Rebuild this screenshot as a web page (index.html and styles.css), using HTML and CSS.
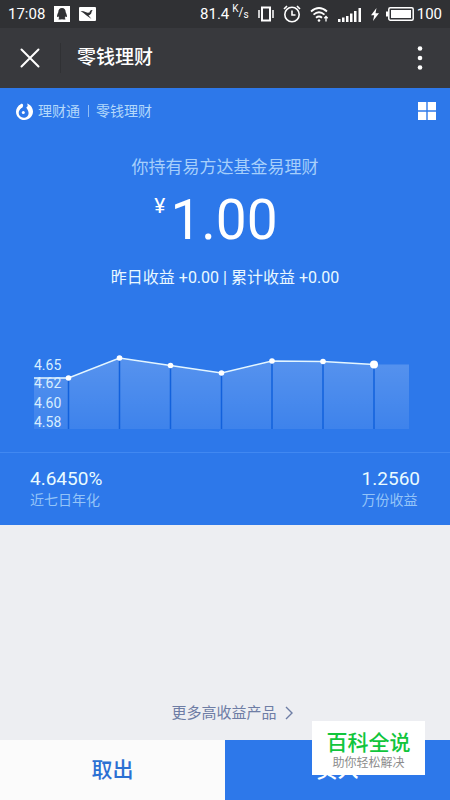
FILE: index.html
```html
<!DOCTYPE html>
<html lang="zh-CN">
<head>
<meta charset="utf-8">
<meta name="viewport" content="width=device-width, initial-scale=1">
<title>零钱理财</title>
<link rel="stylesheet" href="styles.css">
</head>
<body>
<div class="status">
  <span class="status-time">17:08</span>
  <svg class="notice" width="16" height="16" viewBox="0 0 16 16" aria-hidden="true">
    <path fill="#fff" d="M0 0h16v16H0z"/>
    <path fill="#303134" d="M8 2c-2.500 0-3.700 1.800-3.700 4.200C3.700 7.500 2.800 9.200 3 11c.5.300 1-.3 1.300-.8.200.8.600 1.400 1.100 1.900-.7.400-1 .8-.8 1.400H7.500L8 13l.5.500h2.900c.2-.6-.1-1-.8-1.400.5-.5.900-1.100 1.100-1.900.3.500.8 1.100 1.300.8.200-1.800-.7-3.500-1.300-4.800C11.700 3.800 10.500 2 8 2z"/>
  </svg>
  <svg width="17" height="14" viewBox="0 0 17 14" aria-hidden="true">
    <rect width="17" height="14" rx="1" fill="#fff"/>
    <path fill="#303134" d="M1.500 4l3 .3 4 1.500 2-.3.500-1.500 1.200-1 1.500.5-1 1-.5 2-1.500 1.500-1.200.3 3 3.700-5-3.500-3-2.500z"/>
  </svg>
  <span class="speed">81.4 <span class="unit"><sup>K</sup>/<sub>s</sub></span></span>
  <svg class="vibrate" width="16" height="16" viewBox="0 0 16 16" fill="none" stroke="#fff" aria-hidden="true">
    <rect x="4" y="1.500" width="8" height="13" stroke-width="2"/><path stroke-width="1.500" d="M1 4v8M15 4v8"/>
  </svg>
  <svg class="alarm" width="18" height="18" viewBox="0 0 18 18" fill="none" stroke="#fff" stroke-width="1.600" aria-hidden="true">
    <circle cx="9" cy="9.500" r="7.200"/><path d="M9 5.500v4.500h3.500M1 4l3-3M17 4l-3-3"/>
  </svg>
  <svg class="wifi" width="19" height="17" viewBox="0 0 19 17" fill="none" stroke="#fff" stroke-width="1.800" aria-hidden="true">
    <path d="M1 5.500q8-7 16 0M3.500 8.700q5.500-5 11 0M6 11.800q3-2.500 6 0"/><circle cx="9" cy="14.500" r="1.300" fill="#fff" stroke="none"/>
    <path stroke-width="1.300" d="M16 10.500v5M14.300 12.200l1.700-1.700 1.700 1.700"/>
  </svg>
  <svg class="signal" width="24" height="15" viewBox="0 0 24 15" fill="#fff" aria-hidden="true">
    <path d="M0 12h2.500v3H0zM4 10.500h2.500V15H4zM8 9h2.500v6H8zM12 6.500h2.500V15H12zM16 4h2.500v11H16zM20.500 1H23v14h-2.500z"/>
  </svg>
  <svg class="bolt" width="8" height="13" viewBox="0 0 8 13" fill="#fff" aria-hidden="true"><path d="M5.500 0L0 7.200h3.200L2 13l6-7.800H4.500z"/></svg>
  <svg width="28" height="14" viewBox="0 0 28 14" aria-hidden="true">
    <rect x="2.800" y=".8" width="24.400" height="12.400" rx="1.500" fill="none" stroke="#fff" stroke-width="1.500"/>
    <path fill="#fff" d="M5 3h20v8H5zM0 4.500h2v5H0z"/>
  </svg>
  <span class="battery">100</span>
</div>

<header class="navbar">
  <button class="icon-button close" type="button" aria-label="关闭">
    <svg width="20" height="20" viewBox="0 0 20 20" fill="none" stroke="#fff" stroke-width="2" stroke-linecap="round"><path d="M1.500 1.500l17 17M18.500 1.500l-17 17"/></svg>
  </button>
  <h1 class="title">零钱理财</h1>
  <button class="icon-button more" type="button" aria-label="更多">
    <svg width="6" height="24" viewBox="0 0 6 24" fill="#fff"><circle cx="3" cy="2.500" r="2.300"/><circle cx="3" cy="12" r="2.300"/><circle cx="3" cy="21.500" r="2.300"/></svg>
  </button>
</header>

<main class="content">
  <section class="hero">
    <div class="brand">
      <svg width="17" height="17" viewBox="0 0 17 17" aria-hidden="true">
        <path fill="#fff" d="M4.500 1.500C1.800 3 0 5.500 0 8.700 0 13.300 3.800 17 8.500 17S17 13.200 17 8.500C17 4.700 14.500 1.500 11 .4c.8 1.200.8 2.300.4 3.100L8.500 6z"/>
        <path fill="#2d78ea" d="M6.500 0c1.300 2 .3 3.600-1.200 5C4 6.300 2.700 7.800 2.700 9.800c0 2.900 2.200 4.900 5 4.900s4.900-2.100 4.900-4.800c0-2.300-1.500-3.700-2.200-5.200C9.800 3.200 9.500 1 9 0z"/>
        <path fill="#fff" d="M5.800.6c1.800 1 1.600 2.600.4 4.100L3.700 5.800 2.500 3z"/>
        <circle cx="7.300" cy="9.500" r="1.500" fill="#fff"/>
      </svg>
      <span class="brand-name">理财通</span>
      <span class="brand-page">零钱理财</span>
      <button class="icon-button grid" type="button" aria-label="菜单">
        <svg width="18" height="18" viewBox="0 0 18 18" fill="#fff"><path d="M0 0h8.300v8.300H0zM9.700 0H18v8.300H9.700zM0 9.700h8.300V18H0zM9.700 9.700H18V18H9.700z"/></svg>
      </button>
    </div>
    <p class="holding">你持有易方达基金易理财</p>
    <p class="amount"><span class="currency">¥</span>1.00</p>
    <p class="income">昨日收益 +0.00 | 累计收益 +0.00</p>
    <svg class="chart" viewBox="0 0 450 100" role="img" aria-label="近七日年化走势">
      <defs>
        <linearGradient id="area" x1="0" y1="0" x2="0" y2="1"><stop offset="0" stop-color="#fff" stop-opacity=".2"/><stop offset="1" stop-color="#fff" stop-opacity=".08"/></linearGradient>
      </defs>
      <path fill="url(#area)" d="M34 38H68.500L119.500 18l51 7.500 51 7.500 51-12 50.500.5 51.500 3H409v64.500H34z"/>
      <path stroke="#1261dc" stroke-width="1.500" d="M68.500 38v51M119.500 18v71M170.500 25.500v63.500M221.500 33v56M272 21v68M323 21.500v67.500M374 24.500v64.500"/>
      <path fill="none" stroke="#e4f6ff" stroke-width="1.500" d="M34 38H68.500L119.500 18l51 7.500 51 7.500 50.500-12 51 .5 51 3"/>
      <g fill="#fff"><circle cx="68.500" cy="38" r="2.800"/><circle cx="119.500" cy="18" r="2.800"/><circle cx="170.500" cy="25.500" r="2.800"/><circle cx="221.500" cy="33" r="2.800"/><circle cx="272" cy="21" r="2.800"/><circle cx="323" cy="21.500" r="2.800"/><circle cx="374" cy="24.500" r="4"/></g>
      <g class="scale"><text x="34" y="30">4.65</text><text x="34" y="48">4.62</text><text x="34" y="68">4.60</text><text x="34" y="87">4.58</text></g>
    </svg>
    <dl class="stats">
      <div class="stat"><dt>近七日年化</dt><dd>4.6450%</dd></div>
      <div class="stat"><dt>万份收益</dt><dd>1.2560</dd></div>
    </dl>
  </section>
  <a class="products" href="#">更多高收益产品
    <svg width="8" height="14" viewBox="0 0 8 14" fill="none" stroke="#6e7da5" stroke-width="1.400" aria-hidden="true"><path d="M1 1l6 6-6 6"/></svg>
  </a>
</main>

<footer class="actions">
  <button class="action" type="button">取出</button>
  <button class="action primary" type="button">买入</button>
  <div class="watermark"><strong>百科全说</strong><span>助你轻松解决</span></div>
</footer>
</body>
</html>
```
FILE: styles.css
```css
* {
  box-sizing: border-box;
}

body {
  margin: 0;
  min-height: 100vh;
  display: flex;
  flex-direction: column;
  background: #edeef2;
  color: #fff;
  font-family: Roboto, "Noto Sans CJK SC", sans-serif;
}

p, h1, dl, dd {
  margin: 0;
}

button {
  border: 0;
  padding: 0;
  background: none;
  color: inherit;
  font: inherit;
}

svg {
  display: block;
  flex: none;
}

.status {
  display: flex;
  align-items: center;
  height: 28px;
  padding: 0 8px;
  background: #303134;
  font-size: 15px;
}

.notice {
  margin: 0 9px;
}

.speed {
  display: flex;
  margin-left: auto;
  font-size: 15px;
}

.unit {
  margin-left: 3px;
  font-size: 12px;
}

.unit sup, .unit sub {
  font-size: 10px;
  line-height: 0;
}

.unit sup {
  vertical-align: 4px;
}

.unit sub {
  vertical-align: -2px;
}

.vibrate {
  margin-left: 9px;
}

.alarm, .wifi, .signal, .bolt {
  margin-left: 9px;
}

.bolt {
  margin-right: 7px;
}

.battery {
  margin-left: 3px;
}

.navbar {
  display: flex;
  align-items: center;
  height: 60px;
  background: #38393d;
}

.icon-button {
  display: flex;
  align-items: center;
  justify-content: center;
}

.close {
  width: 61px;
  height: 30px;
  border-right: 1px solid #303134;
}

.title {
  margin-left: 16px;
  font-size: 19px;
  font-weight: 500;
  line-height: 30px;
}

.more {
  width: 60px;
  height: 60px;
  margin-left: auto;
}

.content {
  flex: 1;
  display: flex;
  flex-direction: column;
}

.hero {
  background: #2d78ea;
  text-align: center;
}

.brand {
  display: flex;
  align-items: center;
  height: 46px;
  padding: 0 14px 0 16px;
  color: #b4d9fb;
  font-size: 14px;
  line-height: 12px;
}

.brand-name {
  margin-left: 5px;
}

.brand-page {
  margin-left: 8px;
  padding-left: 7px;
  border-left: 1px solid #8fbdf5;
}

.grid {
  margin-left: auto;
}

.holding {
  margin-top: 20px;
  color: #a6cffb;
  font-size: 17px;
  line-height: 26px;
}

.amount {
  display: flex;
  justify-content: center;
  margin-top: 8px;
  padding-right: 18px;
  font-size: 55px;
  line-height: 64px;
}

.currency {
  margin-right: 5px;
  font-size: 21px;
  line-height: 36px;
}

.income {
  margin-top: 14px;
  color: #e9f8ff;
  font-size: 16px;
  line-height: 24px;
}

.chart {
  width: 100%;
  margin-top: 50px;
}

.scale {
  fill: #d8eeff;
  font-size: 14px;
}

.stats {
  display: flex;
  justify-content: space-between;
  margin-top: 12px;
  padding: 15px 30px;
  border-top: 1px solid #4188f1;
  text-align: left;
}

.stat {
  display: flex;
  flex-direction: column-reverse;
}

.stat dt {
  color: #94c4f8;
  font-size: 14px;
  line-height: 20px;
}

.stat dd {
  color: #e9fbff;
  font-size: 19px;
  line-height: 22px;
}

.products {
  display: flex;
  align-items: center;
  justify-content: center;
  gap: 8px;
  margin-top: auto;
  padding: 15px 0 15px 14px;
  color: #6e7da5;
  font-size: 15px;
  line-height: 24px;
  text-decoration: none;
}

.actions {
  position: relative;
  display: flex;
  height: 60px;
}

.action {
  flex: 1;
  padding-bottom: 5px;
  background: #fbfbfb;
  color: #2b70d3;
  font-size: 21px;
  font-weight: 500;
}

.action.primary {
  background: #2d78ea;
  color: #fff;
}

.watermark {
  position: absolute;
  right: 25px;
  bottom: 25px;
  display: flex;
  flex-direction: column;
  align-items: center;
  width: 113px;
  padding: 10px 0 4px;
  background: #fff;
  color: #8c8c8c;
  font-size: 12px;
  line-height: 16px;
}

.watermark strong {
  color: #11c53c;
  font-size: 21px;
  font-weight: 500;
  line-height: 24px;
}
```
